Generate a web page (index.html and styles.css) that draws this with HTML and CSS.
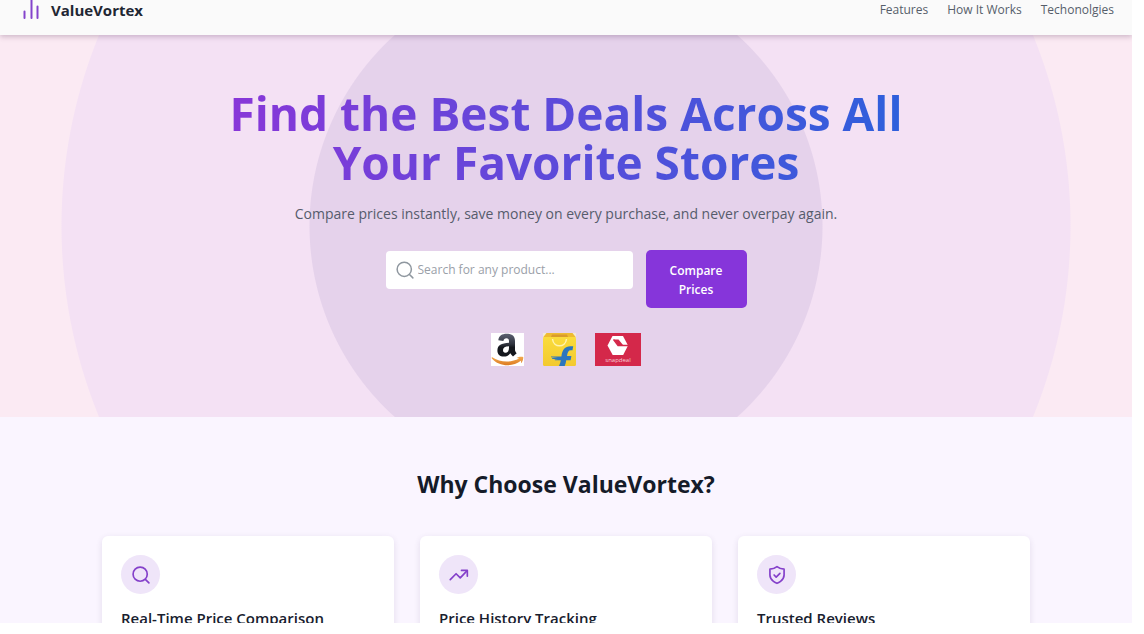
FILE: index.html
```html
<!DOCTYPE html>
<html lang="en">
<head>
<meta charset="utf-8">
<title>ValueVortex</title>
<link rel="stylesheet" href="styles.css">
</head>
<body>
<div class="page">
  <header class="header">
    <a class="brand" href="#">
      <svg class="brand-icon" viewBox="0 0 19 20" aria-hidden="true"><path d="M2.500 11.500V18M9.500 0V18M15.500 6.500V18"/></svg>
      <span>ValueVortex</span>
    </a>
    <nav class="nav">
      <a href="#features">Features</a>
      <a href="#how">How It Works</a>
      <a href="#tech">Techonolgies</a>
    </nav>
  </header>

  <section class="hero">
    <h1 class="hero-title">Find the Best Deals Across All Your Favorite Stores</h1>
    <p class="hero-text">Compare prices instantly, save money on every purchase, and never overpay again.</p>
    <form class="search">
      <label class="search-box">
        <svg class="search-icon" viewBox="0 0 24 24" aria-hidden="true"><circle cx="11" cy="11" r="9.500"/><path d="m18 18 4.500 4.500"/></svg>
        <input class="search-input" type="text" placeholder="Search for any product..." aria-label="Search for any product">
      </label>
      <button class="search-button" type="button">Compare Prices</button>
    </form>
    <div class="stores">
      <svg class="store" viewBox="0 0 33 33" role="img" aria-label="Amazon">
        <defs><linearGradient id="ink" x1="0" y1="0" x2="0" y2="1"><stop offset="0" stop-color="#5b6070"/><stop offset=".45" stop-color="#30343f"/><stop offset=".6" stop-color="#14171d"/></linearGradient>
        <linearGradient id="smile" x1="0" y1="0" x2="0" y2="1"><stop offset="0" stop-color="#f2ab50"/><stop offset="1" stop-color="#dc7a20"/></linearGradient></defs>
        <rect width="33" height="33" fill="#fff"/>
        <path fill="url(#ink)" d="M7.300 7.300C7.800 2.800 11 .8 15.700.8c5.300 0 8.300 2.300 8.300 7.200v8.500c0 1.700.7 2.600 1.700 3.700l-3.700 3.200c-1.300-1-2.100-2-2.700-3.100-1.800 2.300-3.700 3.300-6.600 3.300-3.800 0-6.300-2.200-6.300-6.100 0-5.200 4-7.300 11.600-7.700V8.300c0-2-.7-3-2.600-3-1.700 0-2.600.8-3 2.600zM18 13.300c-4 .1-6 1.200-6 3.800 0 1.700.8 2.700 2.300 2.700 2.500 0 3.700-2 3.700-5z"/>
        <path fill="url(#smile)" d="M.8 24c8.500 5.500 18.500 6 27.300 1.600l-2.500-.6c1.800-1.300 4.500-1.700 6.600-1.100.3 2.200-.6 4.900-2.300 6.400l.3-2.700C21.500 34.500 8.200 33.800.8 25.500z"/>
      </svg>
      <svg class="store" viewBox="0 0 33 33" role="img" aria-label="Flipkart">
        <defs><linearGradient id="bag" x1="0" y1="0" x2="0" y2="1"><stop offset="0" stop-color="#fadc3c"/><stop offset="1" stop-color="#f3c92f"/></linearGradient></defs>
        <path d="M0 0h33v6H0z" fill="#f3ecd3"/>
        <path d="M3.500 0h26L33 4.500H0z" fill="#eebb31"/>
        <path d="M9 1.500h15l1 2.500H8z" fill="#d99b2c"/>
        <rect y="4" width="33" height="29" rx="1.500" fill="url(#bag)"/>
        <path d="M9.500 6c1 9 13 9 14 0" fill="none" stroke="#fff3ae" stroke-width="1.500"/>
        <path d="M16 33c1-2 1.500-3.800 1.800-5.700H12l-.5-.8h3.500l-6-.7v-.8h6l-7-.8v-.8h10.400c.8-6.600 3.600-10.200 9-10.200h2.800l-.7 4h-1.600c-2.500 0-3.300 2-3.900 5.900h4.400l-.8 4.200h-4.400c-.2 2-.7 3.900-1.500 5.700z" fill="#2c76bd"/>
      </svg>
      <svg class="store store-wide" viewBox="0 0 46 33" role="img" aria-label="Snapdeal">
        <rect width="46" height="33" fill="#d4284a"/>
        <path fill="#fff" d="M17.500 3h10.500l5 9.500-4.800 9.500h-10.500L12.500 12.500z"/>
        <path d="M18.500 6.500 23 12.500h10.500" fill="none" stroke="#d4284a" stroke-width="1.300"/>
        <path d="M18.500 6.500h5l4.500 5.500h-5z" fill="#d4284a"/>
        <text x="23" y="28.500" class="store-name">snapdeal</text>
      </svg>
    </div>
  </section>

  <section class="features" id="features">
    <h2 class="features-title">Why Choose ValueVortex?</h2>
    <div class="cards">
      <article class="card">
        <span class="card-icon"><svg viewBox="0 0 24 24" aria-hidden="true"><circle cx="11" cy="11" r="8.500"/><path d="m17.500 17.500 4 4"/></svg></span>
        <h3 class="card-title">Real-Time Price Comparison</h3>
      </article>
      <article class="card">
        <span class="card-icon"><svg viewBox="0 0 24 24" aria-hidden="true"><path d="m1.500 17.500 7-7 5 5 8-8.500"/><path d="M15 6.500h7v7"/></svg></span>
        <h3 class="card-title">Price History Tracking</h3>
      </article>
      <article class="card">
        <span class="card-icon"><svg viewBox="0 0 24 24" aria-hidden="true"><path d="M12 22s8.500-3 8.500-10V5C17 5 14.500 4 12 2 9.500 4 7 5 3.500 5v7c0 7 8.500 10 8.500 10z"/><path d="m8.500 12 2.500 2.500 4.500-4.500"/></svg></span>
        <h3 class="card-title">Trusted Reviews</h3>
      </article>
    </div>
  </section>
</div>
</body>
</html>
```
FILE: styles.css
```css
* {
  box-sizing: border-box;
}

body {
  margin: 0;
  height: 100vh;
  padding: 0 12px 11px 0;
  background: #fff;
  color: #18202e;
  font-family: "Open Sans", "Noto Sans", sans-serif;
}

.page {
  height: 100%;
  overflow: hidden;
  background: #faf5ff;
}

.header {
  position: relative;
  display: flex;
  justify-content: space-between;
  align-items: flex-start;
  padding: 0 18px 15px 22px;
  background: #fafafa;
  box-shadow: 0 2px 5px rgba(80, 40, 80, 0.25);
}

.brand {
  display: flex;
  gap: 10px;
  color: #1f2733;
  font-size: 15px;
  font-weight: 700;
  line-height: 20px;
  text-decoration: none;
}

.brand-icon {
  width: 19px;
  height: 20px;
  fill: none;
  stroke: #8444cc;
  stroke-width: 2;
  stroke-linecap: round;
}

.nav {
  display: flex;
  gap: 19px;
}

.nav a {
  color: #565e6a;
  font-size: 12px;
  line-height: 20px;
  text-decoration: none;
}

.hero {
  display: flex;
  flex-direction: column;
  align-items: center;
  padding: 54px 16px 51px;
  background: radial-gradient(circle at center, #e5d2eb 256px, #f4e1f4 257px, #f4e1f4 504px, #fbeaf3 505px);
  text-align: center;
}

.hero-title {
  max-width: 718px;
  margin: 0;
  background: linear-gradient(90deg, #8b35d8, #2b61dc);
  background-clip: text;
  -webkit-background-clip: text;
  color: transparent;
  font-size: 46px;
  font-weight: 700;
  line-height: 49px;
}

.hero-text {
  margin: 17px 0 26px;
  color: #565c6c;
  font-size: 14px;
  line-height: 20px;
}

.search {
  display: flex;
  align-items: flex-start;
  gap: 13px;
  width: 361px;
  max-width: 100%;
}

.search-box {
  display: flex;
  flex: 1;
  align-items: center;
  gap: 4px;
  height: 38px;
  margin-top: 1px;
  padding: 0 10px;
  border-radius: 4px;
  background: #fff;
}

.search-icon {
  flex: none;
  width: 18px;
  height: 18px;
  fill: none;
  stroke: #8f979f;
  stroke-width: 2;
  stroke-linecap: round;
}

.search-input {
  flex: 1;
  min-width: 0;
  padding: 0;
  border: 0;
  outline: 0;
  background: transparent;
  font: 12px/20px "Open Sans", "Noto Sans", sans-serif;
}

.search-input::placeholder {
  color: #9aa0a8;
}

.search-button {
  width: 101px;
  padding: 11px 20px 9px;
  border: 0;
  border-radius: 5px;
  background: #8635da;
  color: #fff;
  font: 600 12px/19px "Open Sans", "Noto Sans", sans-serif;
}

.stores {
  display: flex;
  gap: 19px;
  margin-top: 25px;
}

.store {
  display: block;
  width: 33px;
  height: 33px;
}

.store-wide {
  width: 46px;
}

.store-name {
  fill: #f8ccd5;
  font-size: 6px;
  text-anchor: middle;
}

.features {
  padding: 51px 102px 40px;
}

.features-title {
  margin: 0 0 36px;
  color: #151b29;
  font-size: 23px;
  font-weight: 700;
  line-height: 32px;
  text-align: center;
}

.cards {
  display: grid;
  grid-template-columns: repeat(3, 1fr);
  gap: 26px;
}

.card {
  padding: 19px 19px 100px;
  border-radius: 6px;
  background: #fff;
  box-shadow: 0 2px 6px rgba(60, 40, 100, 0.12);
}

.card-icon {
  display: grid;
  place-items: center;
  width: 39px;
  height: 39px;
  border-radius: 50%;
  background: #efe5f9;
}

.card-icon svg {
  width: 20px;
  height: 20px;
  fill: none;
  stroke: #8440ca;
  stroke-width: 2;
  stroke-linecap: round;
  stroke-linejoin: round;
}

.card-title {
  margin: 12px 0 0;
  font-size: 15px;
  font-weight: 600;
  line-height: 24px;
  white-space: nowrap;
}
```
